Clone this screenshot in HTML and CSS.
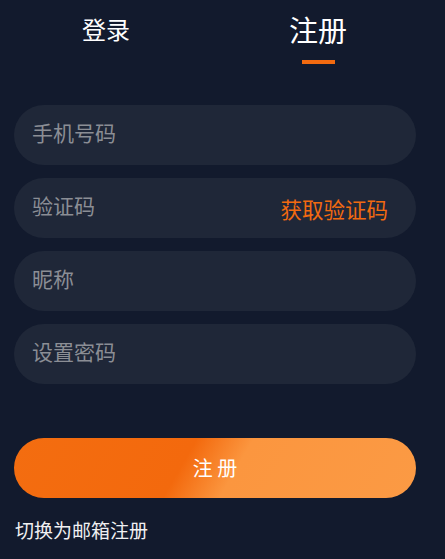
FILE: index.html
```html
<!DOCTYPE html>
<html lang="zh-CN">
<head>
<meta charset="utf-8">
<title>注册</title>
<link rel="stylesheet" href="styles.css">
</head>
<body>
<div class="page">
  <nav class="tabs">
    <div class="tab"><span class="tab-label">登录</span></div>
    <div class="tab tab-active"><span class="tab-label">注册</span><span class="tab-bar"></span></div>
  </nav>
  <form class="form">
    <div class="field"><input class="field-input" type="text" placeholder="手机号码"></div>
    <div class="field"><input class="field-input" type="text" placeholder="验证码"><span class="code-btn">获取验证码</span></div>
    <div class="field"><input class="field-input" type="text" placeholder="昵称"></div>
    <div class="field"><input class="field-input" type="password" placeholder="设置密码"></div>
    <button class="submit" type="button">注 册</button>
  </form>
  <div class="switch">切换为邮箱注册</div>
</div>
</body>
</html>
```
FILE: styles.css
```css
html, body {
  margin: 0;
  padding: 0;
  background: #121a2d;
  height: 100%;
}
body {
  font-family: "Noto Sans CJK SC", "Noto Sans", sans-serif;
  color: #ffffff;
}
.page {
  display: flex;
  flex-direction: column;
}
.tabs {
  display: flex;
  height: 64px;
}
.tab {
  width: 212px;
  display: flex;
  flex-direction: column;
  align-items: center;
  padding-top: 9px;
  box-sizing: border-box;
}
.tab-label {
  display: block;
  font-size: 24px;
  line-height: 40px;
  color: #ffffff;
}
.tab-active .tab-label {
  font-size: 29px;
}
.tab-bar {
  display: block;
  width: 33px;
  height: 4px;
  margin-top: 11px;
  background: #f26a10;
}
.form {
  display: flex;
  flex-direction: column;
  gap: 13px;
  margin: 41px 0 0 14px;
  width: 402px;
}
.field {
  height: 60px;
  border-radius: 30px;
  background: #1f2738;
  display: flex;
  align-items: center;
  padding: 0 28px 0 18px;
}
.field-input {
  flex: 1;
  min-width: 0;
  border: 0;
  outline: 0;
  background: transparent;
  font-family: inherit;
  font-size: 21px;
  color: #ffffff;
  padding: 0 0 6px 0;
  height: 40px;
}
.field-input::placeholder {
  color: #8b8e95;
}
.code-btn {
  font-size: 21.5px;
  color: #f26a10;
  white-space: nowrap;
  margin-top: 0;
}
.submit {
  margin-top: 41px;
  height: 60px;
  border: 0;
  border-radius: 30px;
  background: linear-gradient(120deg, #f36d10 0%, #f3690d 42%, #fb963f 55%, #fb9a44 100%);
  color: #ffffff;
  font-family: inherit;
  font-size: 20px;
  padding: 0 0 2px 0;
}
.switch {
  margin: 19px 0 0 15px;
  font-size: 19px;
  line-height: 26px;
  color: #f0f0f2;
}
```
